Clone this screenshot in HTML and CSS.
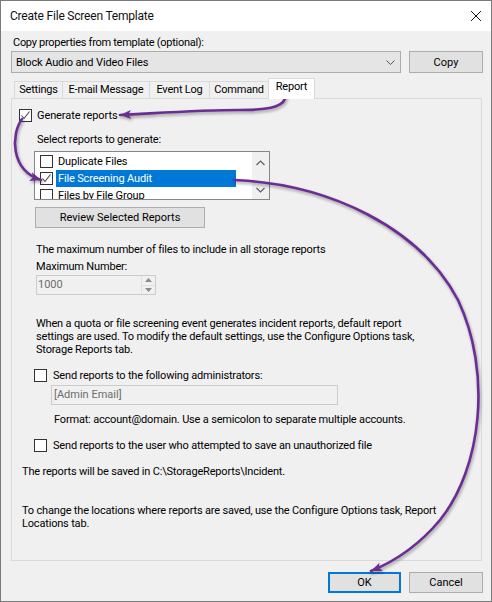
FILE: index.html
```html
<!DOCTYPE html>
<html>
<head>
<meta charset="utf-8">
<link rel="stylesheet" href="styles.css">
</head>
<body>
<div class="window">
  <div class="titlebar">
    <span class="title">Create File Screen Template</span>
    <svg class="close" width="12" height="12" viewBox="0 0 12 12"><path d="M1 1L11 11M11 1L1 11" stroke="#111" stroke-width="1" fill="none"/></svg>
  </div>
  <div class="body">
    <div class="label">Copy properties from template (optional):</div>
    <div class="template-row">
      <div class="combo">
        <span>Block Audio and Video Files</span>
        <svg class="chev" width="9" height="5" viewBox="0 0 9 5"><path d="M0.5 0.5L4.5 4.5L8.5 0.5" stroke="#555" fill="none"/></svg>
      </div>
      <div class="btn copy">Copy</div>
    </div>
    <div class="tabs">
      <div class="tab w-settings">Settings</div>
      <div class="tab w-email">E-mail Message</div>
      <div class="tab w-event">Event Log</div>
      <div class="tab w-command">Command</div>
      <div class="tab active">Report</div>
    </div>
    <div class="panel">
      <div class="cbrow gen">
        <span class="cb"><svg width="11" height="11" viewBox="0 0 11 11"><path d="M1.5 5.5L4 8.5L9.5 1.5" stroke="#444" stroke-width="1.1" fill="none"/></svg></span>
        <span class="ui">Generate reports</span>
      </div>
      <div class="txt sel-label">Select reports to generate:</div>
      <div class="listbox">
        <div class="items">
          <div class="item"><span class="cb"></span><span class="itext">Duplicate Files</span></div>
          <div class="item"><span class="cb"><svg width="11" height="11" viewBox="0 0 11 11"><path d="M1.5 5.5L4 8.5L9.5 1.5" stroke="#444" stroke-width="1.1" fill="none"/></svg></span><span class="itext selected">File Screening Audit</span></div>
          <div class="item"><span class="cb"></span><span class="itext">Files by File Group</span></div>
        </div>
        <div class="vscroll">
          <svg width="9" height="6" viewBox="0 0 9 6"><path d="M0.5 5L4.5 1L8.5 5" stroke="#606060" stroke-width="1.2" fill="none"/></svg>
          <svg width="9" height="6" viewBox="0 0 9 6"><path d="M0.5 1L4.5 5L8.5 1" stroke="#606060" stroke-width="1.2" fill="none"/></svg>
        </div>
      </div>
      <div class="btn review">Review Selected Reports</div>
      <div class="txt max-label">The maximum number of files to include in all storage reports</div>
      <div class="txt maxnum-label">Maximum Number:</div>
      <div class="spinner">
        <span class="spin-val">1000</span>
        <div class="spin-btns">
          <div class="spin-up"><svg width="7" height="4" viewBox="0 0 7 4"><path d="M0 4L3.5 0L7 4Z" fill="#8a8a8a"/></svg></div>
          <div class="spin-down"><svg width="7" height="4" viewBox="0 0 7 4"><path d="M0 0L3.5 4L7 0Z" fill="#8a8a8a"/></svg></div>
        </div>
      </div>
      <div class="txt para">When a quota or file screening event generates incident reports, default report<br>settings are used. To modify the default settings, use the Configure Options task,<br>Storage Reports tab.</div>
      <div class="cbrow admins">
        <span class="cb"></span>
        <span class="txt">Send reports to the following administrators:</span>
      </div>
      <div class="email">[Admin Email]</div>
      <div class="txt format">Format: account@domain. Use a semicolon to separate multiple accounts.</div>
      <div class="cbrow user">
        <span class="cb"></span>
        <span class="txt">Send reports to the user who attempted to save an unauthorized file</span>
      </div>
      <div class="txt saved">The reports will be saved in C:\StorageReports\Incident.</div>
      <div class="txt change">To change the locations where reports are saved, use the Configure Options task, Report<br>Locations tab.</div>
    </div>
    <div class="footer">
      <div class="btn ok">OK</div>
      <div class="btn cancel">Cancel</div>
    </div>
  </div>
  <svg class="arrows" width="492" height="602" viewBox="0 0 492 602">
    <defs>
      <marker id="ah" markerUnits="userSpaceOnUse" markerWidth="12" markerHeight="10" refX="11" refY="5" orient="auto">
        <path d="M0 0.5L11 5L0 9.5L2.5 5Z" fill="#6b2d95"/>
      </marker>
    </defs>
    <g class="arrow-g" fill="none" stroke="#6b2d95" stroke-width="2.6" stroke-linecap="round">
      <path d="M285 92 C289 106 272 110 240 110 C200 110 160 113 120 115" marker-end="url(#ah)"/>
      <path d="M22 119 C11 134 10 170 41 180" marker-end="url(#ah)"/>
      <path d="M234 180 C330 184 420 228 458 300 C492 372 482 468 440 520 C420 544 398 560 371 571" marker-end="url(#ah)"/>
    </g>
  </svg>
</div>
</body>
</html>
```

FILE: styles.css
```css
* { box-sizing: border-box; }
html, body { margin: 0; padding: 0; background: #f0f0f0; }
body {
  font-family: Roboto, "Liberation Sans", Arial, sans-serif;
  font-size: 11px;
  color: #000;
}
.window {
  position: relative;
  width: 492px;
  height: 602px;
  border: 1px solid #7a7a7a;
  background: #f0f0f0;
}
.titlebar {
  height: 30px;
  background: #fff;
  display: flex;
  align-items: center;
  justify-content: space-between;
  padding: 0 9px 0 9px;
}
.title { font-size: 12px; letter-spacing: -0.2px; color: #111; }
.close { display: block; }
.body { padding: 5px 8px 0 10px; }
.label { font-size: 11px; letter-spacing: -0.28px; line-height: 14px; height: 14px; padding-left: 2px; }
.template-row { display: flex; gap: 8px; margin-top: 1px; height: 22px; }
.combo {
  flex: 1;
  display: flex;
  align-items: center;
  justify-content: space-between;
  border: 1px solid #adadad;
  background: #e5e5e5;
  font-size: 11px;
  letter-spacing: -0.12px;
  padding: 0 5px 0 4px;
}
.btn {
  display: flex;
  align-items: center;
  justify-content: center;
  border: 1px solid #adadad;
  background: #e1e1e1;
  font-size: 11px;
  height: 21px;
}
.copy { width: 74px; height: 22px; }
.tabs { display: flex; margin-top: 5px; margin-left: 3px; height: 20px; align-items: flex-end; }
.tab {
  height: 17px;
  border-top: 1px solid #d9d9d9;
  border-left: 1px solid #d9d9d9;
  font-size: 11px;
  letter-spacing: -0.2px;
  line-height: 16px;
  text-align: center;
  background: #f0f0f0;
  white-space: nowrap;
}
.w-settings { width: 48px; }
.w-email { width: 87px; }
.w-event { width: 60px; }
.w-command { width: 59px; }
.tab.active {
  width: 47px;
  height: 21px;
  margin-bottom: -1px;
  border-right: 1px solid #d9d9d9;
  background: #fff;
  position: relative;
  z-index: 1;
  line-height: 15px;
}
.panel {
  height: 463px;
  margin-right: 1px;
  border: 1px solid #d9d9d9;
  background: #f0f0f0;
  padding-top: 10px;
}
.txt { font-size: 11px; line-height: 13px; letter-spacing: -0.18px; }
.ui { font-size: 11px; letter-spacing: -0.1px; }
.cbrow { display: flex; align-items: center; height: 13px; }
.cb {
  width: 13px;
  height: 13px;
  border: 1px solid #333;
  background: #fff;
  display: inline-flex;
  align-items: center;
  justify-content: center;
  flex: none;
}
.cb svg { display: block; }
.gen { margin-left: 7px; gap: 5px; }
.sel-label { margin: 11px 0 0 25px; }
.listbox {
  margin: 5px 0 0 22px;
  width: 236px;
  height: 49px;
  border: 1px solid #828790;
  background: #fff;
  display: flex;
  overflow: hidden;
}
.items { flex: 1; padding-top: 1px; overflow: hidden; }
.item { height: 17px; display: flex; align-items: center; padding-left: 5px; }
.itext { font-size: 11px; letter-spacing: -0.15px; margin-left: 3px; padding-left: 2px; height: 17px; line-height: 17px; }
.itext.selected { background: #0078d7; color: #fff; width: 180px; }
.vscroll {
  width: 17px;
  background: #f0f0f0;
  display: flex;
  flex-direction: column;
  align-items: center;
  justify-content: space-between;
  padding: 8px 0 6px;
}
.vscroll svg { display: block; }
.review { margin: 7px 0 0 23px; width: 170px; }
.max-label { margin: 15px 0 0 24px; }
.maxnum-label { margin: 4px 0 0 24px; }
.spinner {
  margin: 2px 0 0 24px;
  width: 120px;
  height: 20px;
  border: 1px solid #cccccc;
  background: #f0f0f0;
  display: flex;
  justify-content: space-between;
}
.spin-val { color: #6d6d6d; font-size: 11px; line-height: 18px; padding-left: 1px; }
.spin-btns { width: 14px; display: flex; flex-direction: column; border-left: 1px solid #e0e0e0; }
.spin-up, .spin-down { flex: 1; display: flex; align-items: center; justify-content: center; }
.spin-up { border-bottom: 1px solid #e0e0e0; }
.spin-btns svg { display: block; }
.para { margin: 22px 0 0 24px; }
.admins { margin: 13px 0 0 22px; gap: 6px; }
.email {
  margin: 3px 0 0 39px;
  width: 287px;
  height: 20px;
  border: 1px solid #cccccc;
  background: #f0f0f0;
  color: #6d6d6d;
  font-size: 11px;
  line-height: 18px;
  padding-left: 2px;
}
.format { margin: 8px 0 0 42px; }
.user { margin: 13px 0 0 22px; gap: 6px; }
.saved { margin: 13px 0 0 10px; }
.change { margin: 26px 0 0 10px; }
.footer { display: flex; justify-content: flex-end; gap: 8px; margin-top: 11px; }
.ok { width: 73px; border: 2px solid #0078d7; }
.cancel { width: 74px; }
.arrows { position: absolute; left: -1px; top: -1px; pointer-events: none; }
.arrow-g { filter: drop-shadow(1px 2px 1.5px rgba(0,0,0,0.35)); }
```
